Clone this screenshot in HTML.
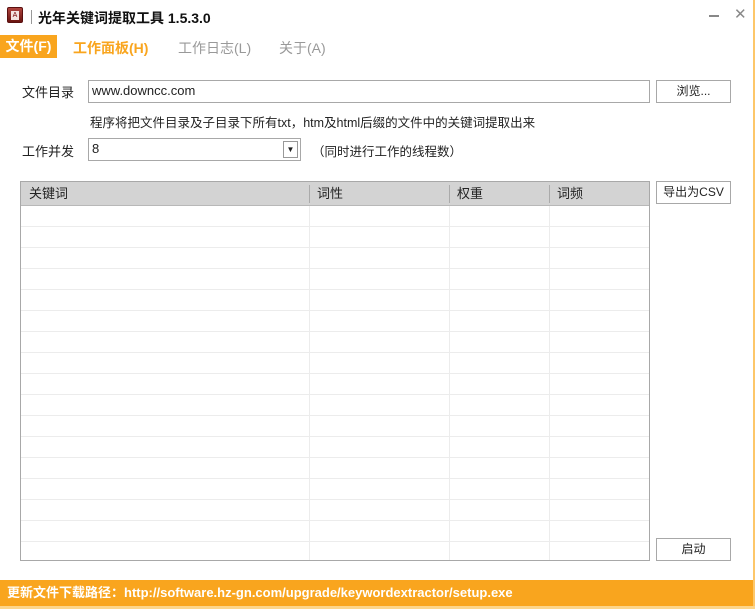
<!DOCTYPE html>
<html><head><meta charset="utf-8"><style>
*{margin:0;padding:0;box-sizing:border-box}
body{width:755px;height:609px;background:#fff;font-family:"Liberation Sans","Noto Sans CJK SC",sans-serif;font-size:13px;color:#222;position:relative;overflow:hidden}
.a{position:absolute}
.btn{position:absolute;border:1px solid #a8a8a8;background:#fff;text-align:center;font-size:12px;line-height:20px}
.inp{position:absolute;border:1px solid #a8a8a8;background:#fff;padding-left:3px;line-height:20px;font-size:13px}
</style></head><body>
<div class="a" style="right:0;top:0;width:2px;height:609px;background:#fdc76a"></div>
<div class="a" style="left:0;bottom:0;width:755px;height:3px;background:#fdd58a"></div>
<div class="a" style="left:7px;top:7px;width:16px;height:16px;background:linear-gradient(#b0443e,#6a1410);border-radius:2px;border:1px solid #5a1010"><div style="margin:3px auto 0;width:8px;height:9px;background:#f4e4e0;font-size:7px;line-height:9px;text-align:center;color:#700">A</div></div>
<div class="a" style="left:31px;top:10px;width:1px;height:14px;background:#999"></div>
<div class="a" style="left:38px;top:8px;font-size:14px;font-weight:bold;color:#111">光年关键词提取工具 1.5.3.0</div>
<div class="a" style="left:709px;top:15px;width:10px;height:2px;background:#888"></div>
<div class="a" style="left:734px;top:5px;font-size:15px;color:#888">✕</div>
<div class="a" style="left:0;top:35px;width:57px;height:23px;background:#f9a51e;color:#fff;font-weight:bold;font-size:14px;line-height:23px;text-align:center">文件(F)</div>
<div class="a" style="left:73px;top:38px;color:#f9a51e;font-weight:bold;font-size:14px">工作面板(H)</div>
<div class="a" style="left:178px;top:38px;color:#999;font-size:14px">工作日志(L)</div>
<div class="a" style="left:279px;top:38px;color:#999;font-size:14px">关于(A)</div>
<div class="a" style="left:22px;top:82px">文件目录</div>
<div class="inp" style="left:88px;top:80px;width:562px;height:23px">www.downcc.com</div>
<div class="btn" style="left:656px;top:80px;width:75px;height:23px">浏览...</div>
<div class="a" style="left:90px;top:112px;font-size:12.5px">程序将把文件目录及子目录下所有txt，htm及html后缀的文件中的关键词提取出来</div>
<div class="a" style="left:22px;top:141px">工作并发</div>
<div class="inp" style="left:88px;top:138px;width:213px;height:23px">8<div class="a" style="right:2px;top:2px;width:15px;height:17px;border:1px solid #999;font-size:8px;line-height:15px;text-align:center">▼</div></div>
<div class="a" style="left:312px;top:141px;font-size:12.5px">（同时进行工作的线程数）</div>
<div class="a" style="left:20px;top:181px;width:630px;height:380px;border:1px solid #a8a8a8;background:#fff;
background-image:repeating-linear-gradient(to bottom,transparent 0,transparent 20px,#ececec 20px,#ececec 21px),linear-gradient(to right,transparent 288px,#ececec 288px,#ececec 289px,transparent 289px,transparent 428px,#ececec 428px,#ececec 429px,transparent 429px,transparent 528px,#ececec 528px,#ececec 529px,transparent 529px);background-position:0 24px,0 0;background-repeat:repeat,no-repeat">
<div style="height:24px;background:#d3d3d3;border-bottom:1px solid #b8b8b8;position:relative;font-size:13px;line-height:23px">
<span class="a" style="left:8px">关键词</span>
<span class="a" style="left:288px;top:3px;width:1px;height:18px;background:#aaa"></span><span class="a" style="left:296px">词性</span>
<span class="a" style="left:428px;top:3px;width:1px;height:18px;background:#aaa"></span><span class="a" style="left:436px">权重</span>
<span class="a" style="left:528px;top:3px;width:1px;height:18px;background:#aaa"></span><span class="a" style="left:536px">词频</span>
</div></div>
<div class="btn" style="left:656px;top:181px;width:75px;height:23px">导出为CSV</div>
<div class="btn" style="left:656px;top:538px;width:75px;height:23px">启动</div>
<div class="a" style="left:0;top:580px;width:753px;height:26px;background:#f9a51e;color:#fff;font-weight:bold;font-size:13px;line-height:26px;padding-left:7px">更新文件下载路径：http://software.hz-gn.com/upgrade/keywordextractor/setup.exe</div>
</body></html>
